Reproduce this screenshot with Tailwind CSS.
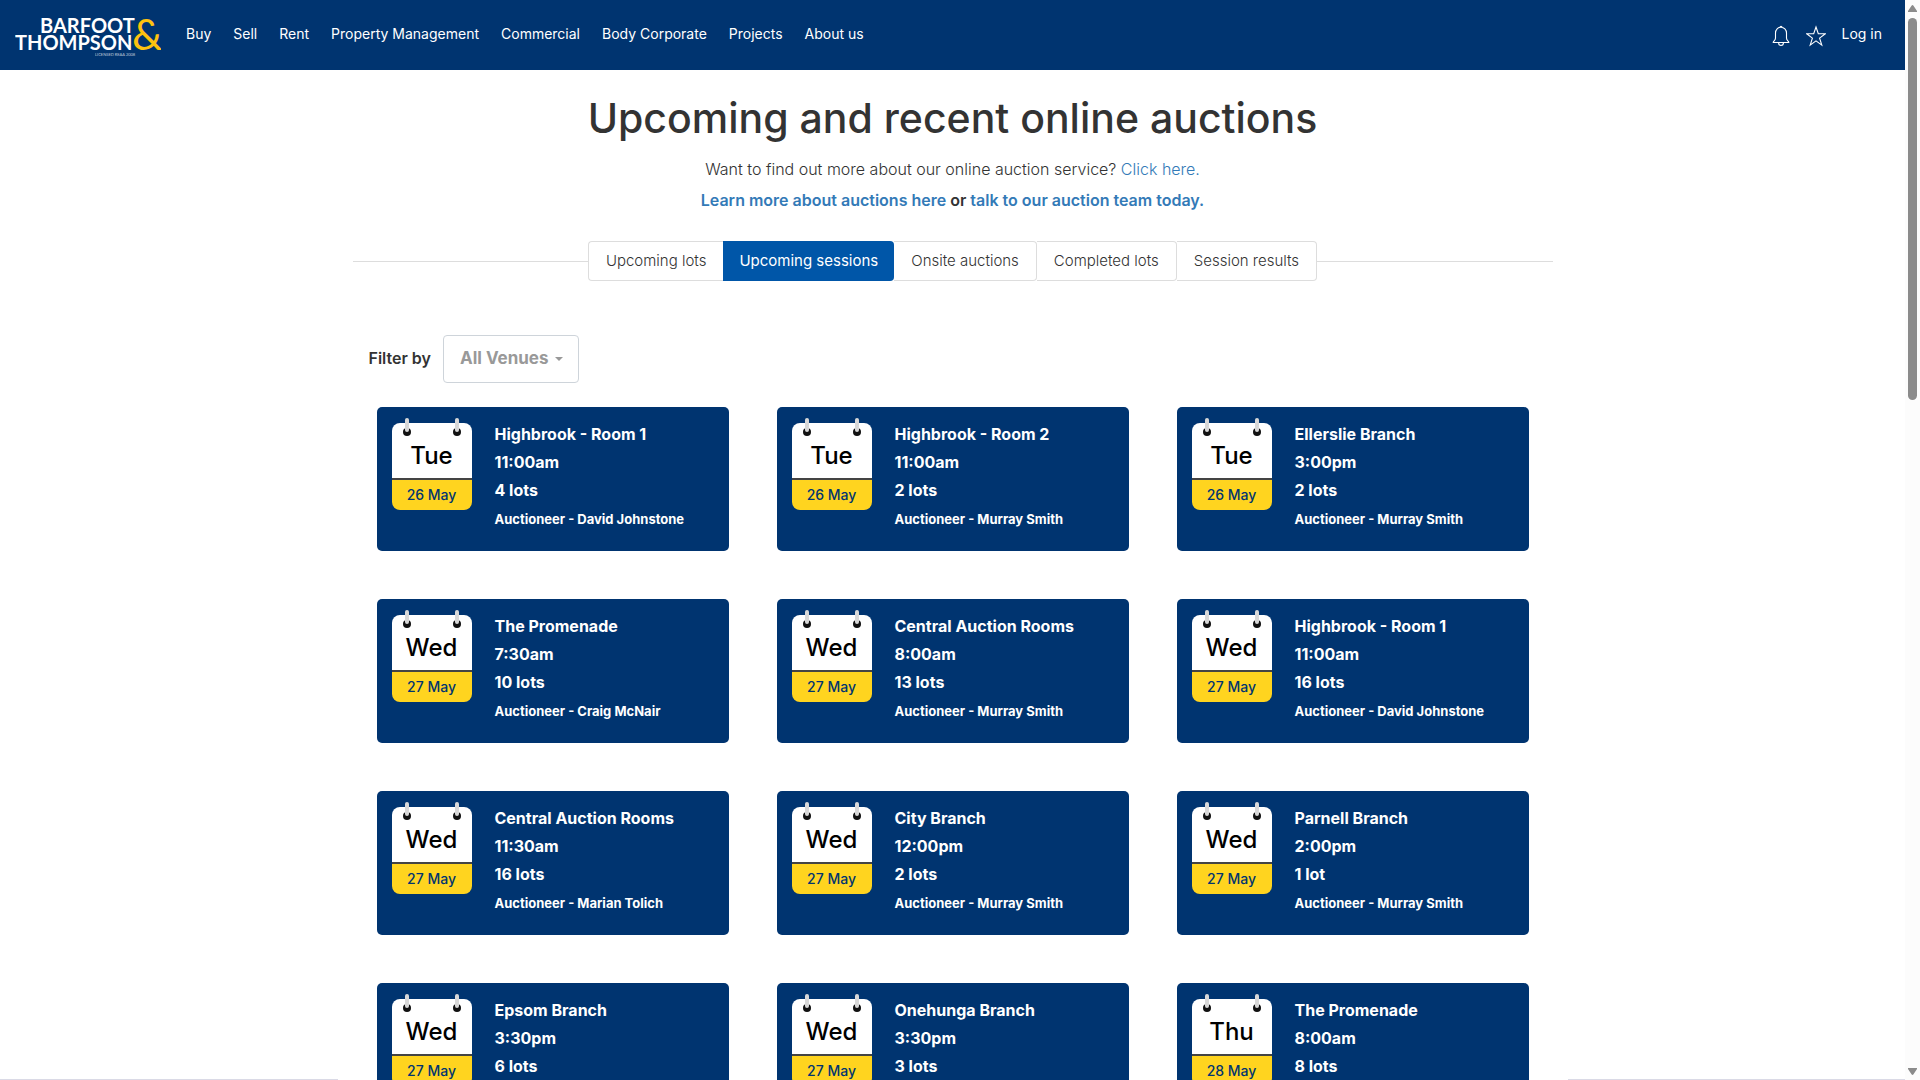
<!DOCTYPE html>
<html lang="en">
  <head>
    <meta charset="UTF-8" />
    <meta name="viewport" content="width=device-width, initial-scale=1.0" />
    <title>Upcoming and recent online auctions</title>
    <script src="https://cdn.jsdelivr.net/npm/@tailwindcss/browser@4"></script>
  </head>
  <body class="flex h-screen overflow-hidden bg-white font-[Inter,sans-serif] text-[#333]">
    <div class="relative flex-1 overflow-hidden">
      <!-- header -->
      <header class="flex h-[70px] items-center bg-[#003470] pl-[15px] pr-[23px] text-sm text-white">
        <a href="#" class="mr-[25px]" aria-label="Barfoot and Thompson">
          <svg width="146" height="44" viewBox="0 0 146 44" fill="#fff" font-family="Lato, sans-serif" font-weight="700">
            <text x="25" y="20" font-size="20">BARFOOT</text>
            <text x="0" y="37" font-size="20">THOMPSON</text>
            <text x="117" y="37" font-size="43" fill="#fdc20f" font-weight="400">&amp;</text>
            <text x="80" y="43" font-size="4" font-weight="400" opacity="0.7">LICENSED REAA 2008</text>
          </svg>
        </a>
        <nav class="flex gap-[22px] pb-0.5">
          <a href="#">Buy</a>
          <a href="#">Sell</a>
          <a href="#">Rent</a>
          <a href="#">Property Management</a>
          <a href="#">Commercial</a>
          <a href="#">Body Corporate</a>
          <a href="#">Projects</a>
          <a href="#">About us</a>
        </nav>
        <div class="ml-auto flex items-center">
          <button type="button" class="mr-4 pt-0.5" aria-label="Notifications">
            <svg width="18" height="22" viewBox="0 0 18 22" fill="none" stroke="#fff" stroke-width="1.1">
              <path d="M8 2.2a1 1 0 0 1 2 0M1.2 17.5h15.6c0-1.800-2.300-1.600-2.300-4.500V8a5.500 5.800 0 0 0-11 0v5c0 2.900-2.300 2.700-2.300 4.500zM6.500 17.500a2.500 3 0 0 0 5 0" />
            </svg>
          </button>
          <button type="button" class="mr-4 pt-0.5" aria-label="Favourites">
            <svg width="20" height="22" viewBox="0 0 20 22" fill="none" stroke="#fff" stroke-width="1.1">
              <path d="M10 2l2.300 6.800h7l-5.700 4.300 2.200 7-5.800-4.200-5.800 4.200 2.200-7L.7 8.800h7z" />
            </svg>
          </button>
          <a href="#" class="pb-0.5">Log in</a>
        </div>
      </header>

      <main class="mx-auto max-w-[1200px]">
        <h1 class="mt-6 text-center text-[41px] leading-[48px] font-medium">Upcoming and recent online auctions</h1>
        <div class="mt-3 text-center text-base leading-[31px]">
          <p class="font-light">Want to find out more about our online auction service? <a href="#" class="text-[#337ab7]">Click here.</a></p>
          <p class="font-semibold"><a href="#" class="text-[#337ab7]">Learn more about auctions here</a> or <a href="#" class="text-[#337ab7]">talk to our auction team today.</a></p>
        </div>

        <!-- tabs -->
        <div class="mt-[25px] flex items-center">
          <div class="h-px flex-1 bg-[#ddd]"></div>
          <div class="flex h-10 text-[15px] font-light">
            <button type="button" class="rounded-l-sm border border-r-0 border-[#ddd] px-[17px]">Upcoming lots</button>
            <button type="button" class="rounded-r-sm bg-[#0056a8] px-4 font-normal text-white">Upcoming sessions</button>
            <button type="button" class="rounded-r-sm border border-l-0 border-[#ddd] px-[17px]">Onsite auctions</button>
            <button type="button" class="rounded-r-sm border border-l-0 border-[#ddd] px-[17px]">Completed lots</button>
            <button type="button" class="rounded-r-sm border border-l-0 border-[#ddd] px-[17px]">Session results</button>
          </div>
          <div class="h-px flex-1 bg-[#ddd]"></div>
        </div>

        <!-- filter -->
        <div class="mt-[54px] flex items-center pl-4">
          <label for="venue" class="mr-3 pb-0.5 text-base font-semibold">Filter by</label>
          <div class="relative">
            <select id="venue" class="h-12 w-[136px] appearance-none rounded-sm border border-[#ced4da] bg-white pl-4 text-[17px] font-bold text-[#999]">
              <option>All Venues</option>
            </select>
            <svg class="pointer-events-none absolute top-[22px] right-4" width="8" height="4" viewBox="0 0 8 4" fill="#999"><path d="M0 0h8L4 4z" /></svg>
          </div>
        </div>

        <div id="sessions" class="grid grid-cols-3"></div>
      </main>

      <div class="absolute inset-x-0 bottom-0 flex">
        <div class="h-px flex-1 bg-[#dadae6]"></div>
        <div class="w-[1230px]"></div>
        <div class="h-px flex-1 bg-[#dadae6]"></div>
      </div>
    </div>

    <!-- scrollbar -->
    <div class="flex w-[15px] flex-col items-center bg-[#fcfcfc] py-[5px]">
      <svg width="9" height="7" viewBox="0 0 9 7" fill="#8b8b8b"><path d="M4.500 0Q5 0 5.500.8L9 6v1H0V6L3.500.8Q4 0 4.500 0z" /></svg>
      <div class="mt-[6px] h-[382px] w-[9px] rounded-full bg-[#8b8b8b]"></div>
      <svg class="mt-auto" width="9" height="7" viewBox="0 0 9 7" fill="#8b8b8b"><path d="M4.500 7Q5 7 5.500 6.200L9 1V0H0v1l3.500 5.200Q4 7 4.500 7z" /></svg>
    </div>

    <script>
      const sessions = [
        { day: "Tue", date: "26 May", venue: "Highbrook - Room 1", time: "11:00am", lots: "4 lots", auctioneer: "David Johnstone" },
        { day: "Tue", date: "26 May", venue: "Highbrook - Room 2", time: "11:00am", lots: "2 lots", auctioneer: "Murray Smith" },
        { day: "Tue", date: "26 May", venue: "Ellerslie Branch", time: "3:00pm", lots: "2 lots", auctioneer: "Murray Smith" },
        { day: "Wed", date: "27 May", venue: "The Promenade", time: "7:30am", lots: "10 lots", auctioneer: "Craig McNair" },
        { day: "Wed", date: "27 May", venue: "Central Auction Rooms", time: "8:00am", lots: "13 lots", auctioneer: "Murray Smith" },
        { day: "Wed", date: "27 May", venue: "Highbrook - Room 1", time: "11:00am", lots: "16 lots", auctioneer: "David Johnstone" },
        { day: "Wed", date: "27 May", venue: "Central Auction Rooms", time: "11:30am", lots: "16 lots", auctioneer: "Marian Tolich" },
        { day: "Wed", date: "27 May", venue: "City Branch", time: "12:00pm", lots: "2 lots", auctioneer: "Murray Smith" },
        { day: "Wed", date: "27 May", venue: "Parnell Branch", time: "2:00pm", lots: "1 lot", auctioneer: "Murray Smith" },
        { day: "Wed", date: "27 May", venue: "Epsom Branch", time: "3:30pm", lots: "6 lots", auctioneer: "Murray Smith" },
        { day: "Wed", date: "27 May", venue: "Onehunga Branch", time: "3:30pm", lots: "3 lots", auctioneer: "Murray Smith" },
        { day: "Thu", date: "28 May", venue: "The Promenade", time: "8:00am", lots: "8 lots", auctioneer: "Murray Smith" },
      ];

      // calendar ring: hole with the grey wire over it
      const ring = `
        <svg width="8" height="18" viewBox="0 0 8 18">
          <circle cx="4" cy="14" r="4" fill="#111" />
          <rect x="2" y="0" width="4" height="14" rx="2" fill="#d8d8d8" />
        </svg>`;

      document.getElementById("sessions").innerHTML = sessions
        .map(
          (item) => `
        <div class="p-6">
          <a href="#" class="flex h-36 rounded-[5px] bg-[#003470] px-[15px] pt-[13px] text-white">
            <div class="relative mt-[3px] h-[87px] w-20 text-center">
              <div class="absolute inset-x-[11px] -top-[5px] flex justify-between">${ring}${ring}</div>
              <div class="h-[57px] rounded-t-lg border-b-2 border-[#444] bg-white pt-[17px] text-2xl leading-8 font-medium text-black">${item.day}</div>
              <div class="h-[30px] rounded-b-lg bg-[#ffd41f] text-sm leading-[30px] font-medium text-[#003470]">${item.date}</div>
            </div>
            <div class="ml-[23px] text-base leading-7 font-bold">
              <p>${item.venue}</p>
              <p>${item.time}</p>
              <p>${item.lots}</p>
              <p class="text-[13px] leading-[30px]">Auctioneer - ${item.auctioneer}</p>
            </div>
          </a>
        </div>`
        )
        .join("");
    </script>
  </body>
</html>
